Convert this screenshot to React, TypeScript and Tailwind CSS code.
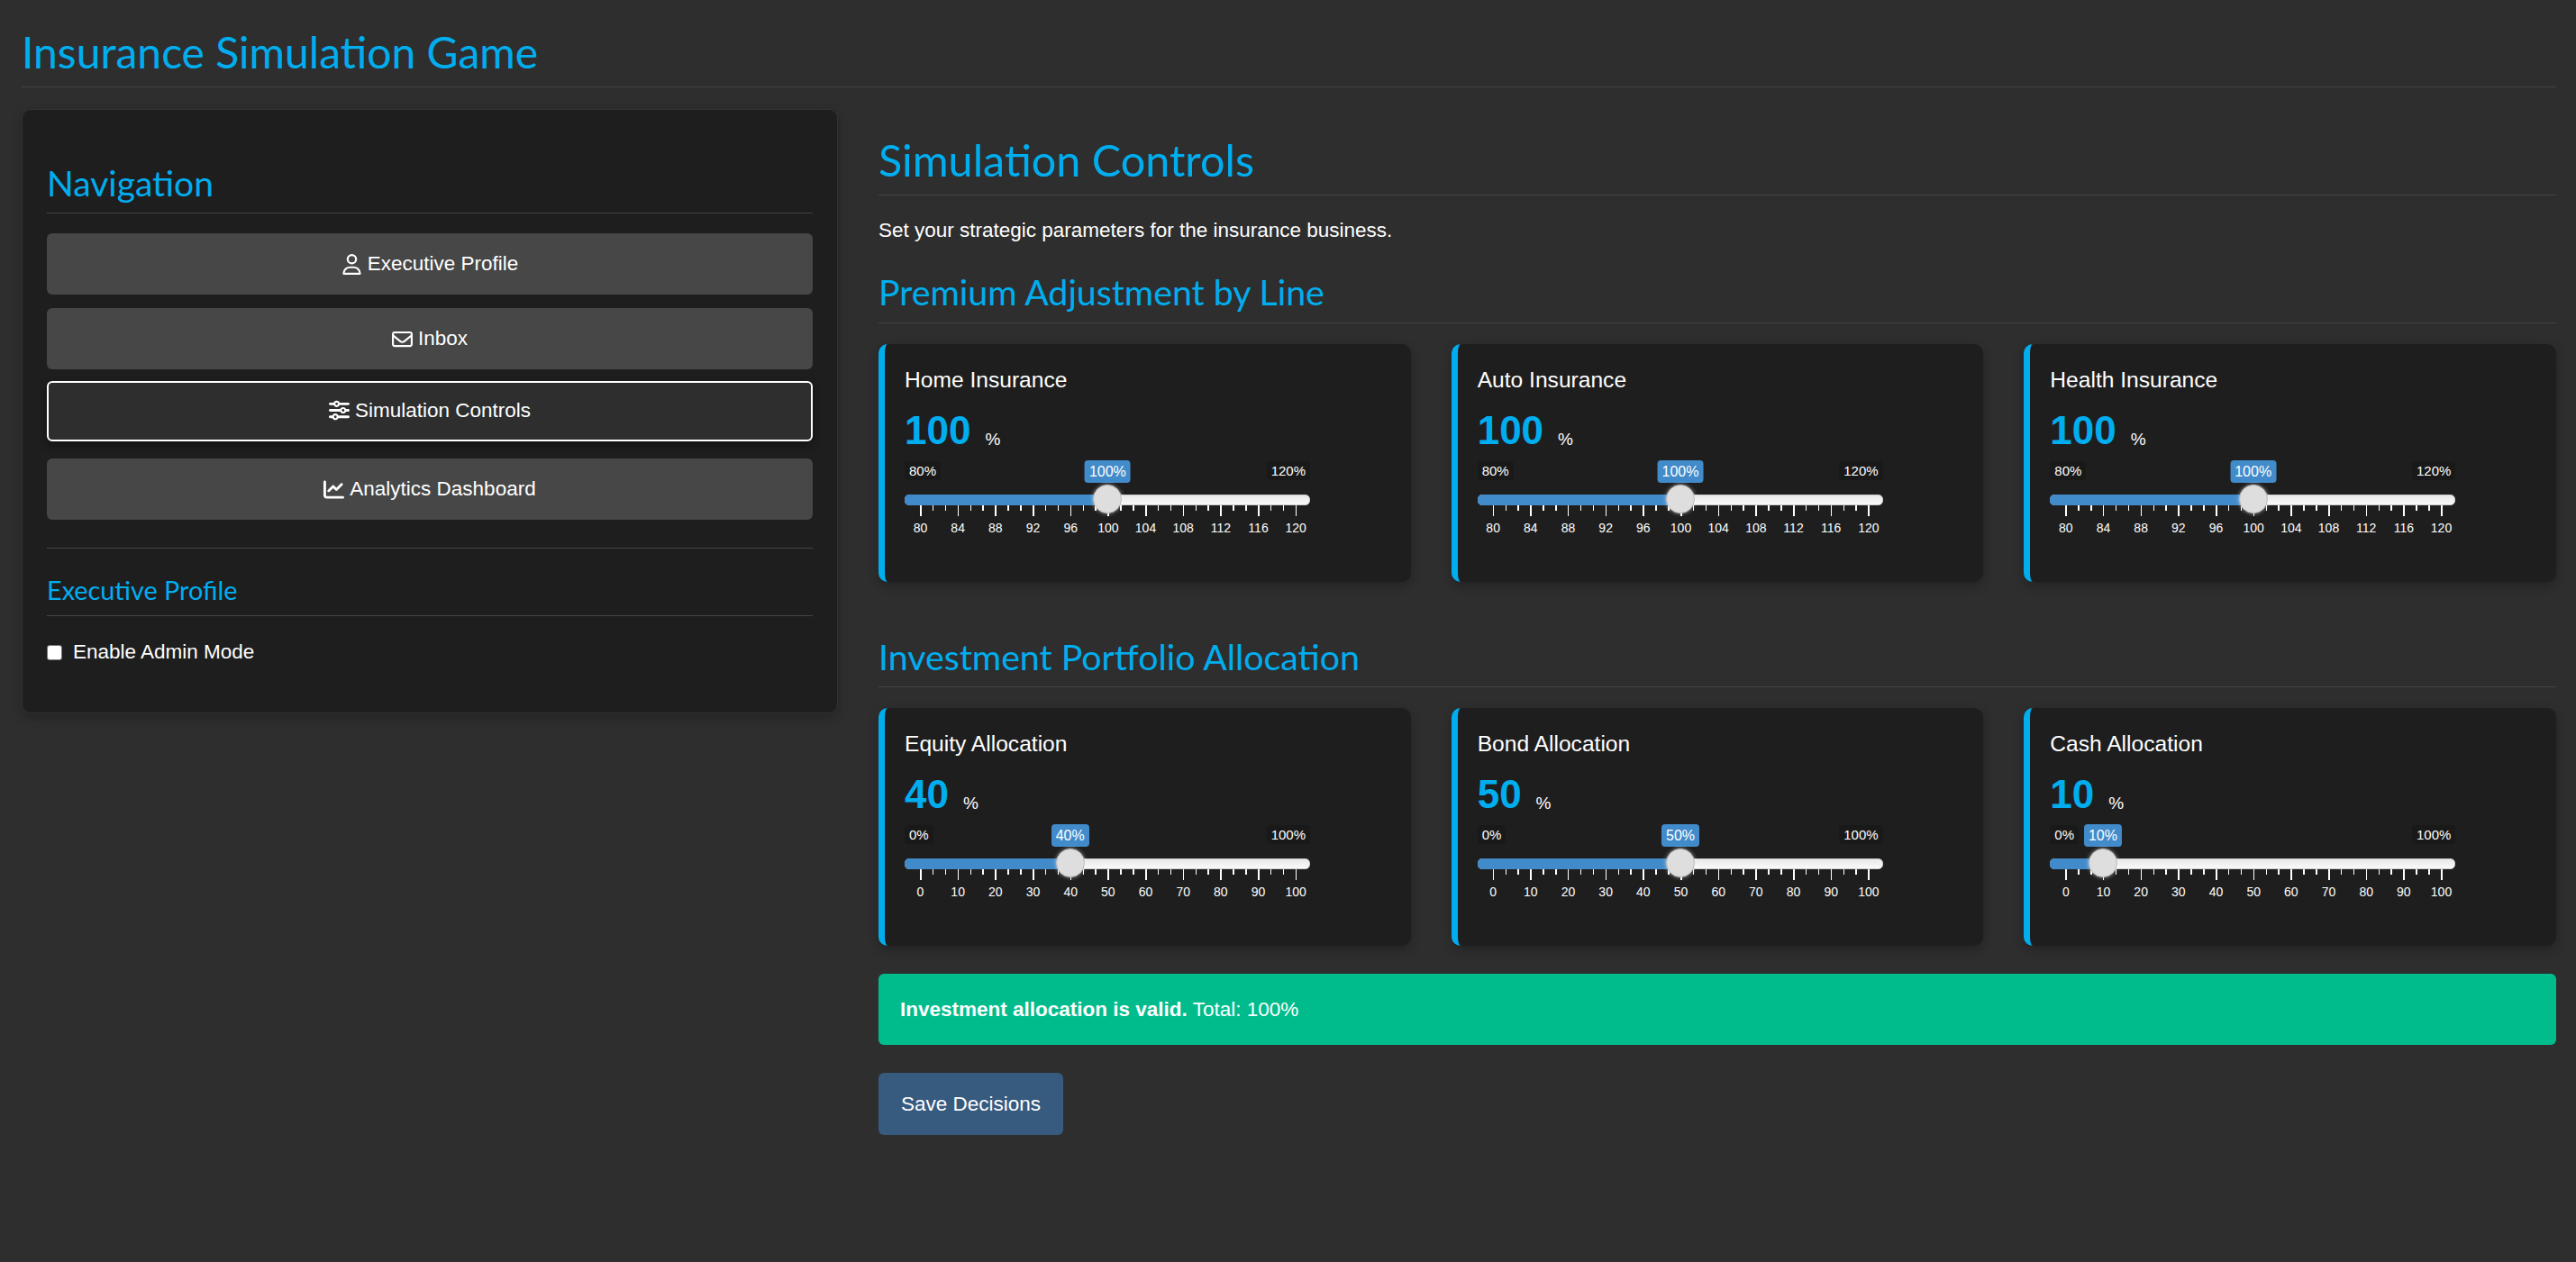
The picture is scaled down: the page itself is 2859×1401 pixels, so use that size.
import React from "react";
import { FaRegUser, FaRegEnvelope, FaSliders, FaChartLine } from "react-icons/fa6";

const lato = "font-['Lato',sans-serif] font-normal text-[#00aeef]";

interface SliderCardProps {
  title: string;
  value: number;
  min: number;
  max: number;
  step: number;
}

// grid ticks: 2 minor marks between each labelled major mark
const SliderCard: React.FC<SliderCardProps> = ({ title, value, min, max, step }) => {
  const pct = (value - min) / (max - min);
  const thumbX = 17 + pct * 416.7;
  const ticks = Array.from({ length: 31 }, (_, i) => i);
  const labels = Array.from({ length: 11 }, (_, i) => min + i * step);

  return (
    <div className="h-[264px] rounded-[10px] border-l-[7px] border-[#00aeef] bg-[#1e1e1e] pl-[22px] pt-[25px] shadow-[0_4px_12px_rgba(0,0,0,0.25)]">
      <div className="text-[24.6px] leading-[30px] text-white">{title}</div>
      <div className="mt-[16px] flex h-[50px] items-end">
        <span className="text-[44px] font-bold leading-[50px] text-[#00aeef]">{value}</span>
        <span className="mb-[3px] ml-[16px] text-[19px] leading-[24px] text-white">%</span>
      </div>
      <div className="relative mt-[8px] h-[100px] w-[450px] text-white">
        <span className="absolute left-0 top-[1px] rounded-[4px] bg-[#191919] px-[5px] text-[15px] leading-[21px]">{min}%</span>
        <span className="absolute right-0 top-[1px] rounded-[4px] bg-[#191919] px-[5px] text-[15px] leading-[21px]">{max}%</span>
        <span
          className="absolute top-0 -translate-x-1/2 rounded-[4px] bg-[#428bca] px-[5px] text-[16px] leading-[25px]"
          style={{ left: thumbX }}
        >
          {value}%
        </span>
        <div className="absolute left-0 top-[38px] h-[12px] w-full rounded-[5px] border border-[#ccc] bg-gradient-to-b from-[#e8e8e8] to-[#fafafa]" />
        <div className="absolute left-0 top-[38px] h-[12px] rounded-l-[5px] bg-[#428bca]" style={{ width: thumbX }} />
        {ticks.map((t) => (
          <span
            key={t}
            className={t % 3 === 0 ? "absolute top-[50px] h-[12px] w-[1.5px] bg-white" : "absolute top-[50px] h-[6px] w-[1.5px] bg-white"}
            style={{ left: 17 + (t * 416.7) / 30 }}
          />
        ))}
        {labels.map((l, i) => (
          <span
            key={l}
            className="absolute top-[66px] -translate-x-1/2 text-[14px] leading-[18px]"
            style={{ left: 17.5 + i * 41.67 }}
          >
            {l}
          </span>
        ))}
        <div
          className="absolute top-[27px] h-[32px] w-[32px] -translate-x-1/2 rounded-full border border-[#bbb] bg-[#dedede] shadow-[0_0_4px_rgba(255,255,255,0.55)]"
          style={{ left: thumbX }}
        />
      </div>
    </div>
  );
};

const NavButton: React.FC<{ icon: React.ReactNode; label: string; active?: boolean; className?: string }> = ({
  icon,
  label,
  active,
  className,
}) => (
  <button
    className={
      active
        ? "flex h-[67px] w-full items-center justify-center gap-[6px] rounded-[6px] border-2 border-white bg-[#2e2e2e] pb-[2px] text-[22.5px] text-white shadow-[0_4px_10px_rgba(0,0,0,0.4)] " + (className ?? "")
        : "flex h-[68px] w-full items-center justify-center gap-[6px] rounded-[6px] bg-[#474747] text-[22.5px] text-white " + (className ?? "")
    }
  >
    {icon}
    {label}
  </button>
);

export default function App() {
  return (
    <div className="min-h-[1401px] bg-[#2e2e2e] pl-[24px] pr-[22px] font-['Liberation_Sans',Arial,sans-serif] text-white">
      <h1 className={`${lato} h-[97px] border-b border-[#444] pt-[25px] text-[48px] leading-[66px]`}>Insurance Simulation Game</h1>

      <div className="mt-[24px] flex items-start gap-[45px]">
        {/* Sidebar */}
        <aside className="h-[671px] w-[906px] shrink-0 rounded-[10px] border border-[#333] bg-[#1e1e1e] px-[27px] shadow-[0_4px_12px_rgba(0,0,0,0.25)]">
          <h2 className={`${lato} h-[115px] border-b border-[#444] pt-[53px] text-[39px] leading-[56px]`}>Navigation</h2>
          <NavButton className="mt-[22px]" icon={<FaRegUser className="h-[23px] w-auto" />} label="Executive Profile" />
          <NavButton className="mt-[15px]" icon={<FaRegEnvelope className="h-[23px] w-auto" />} label="Inbox" />
          <NavButton className="mt-[13px]" active icon={<FaSliders className="h-[23px] w-auto" />} label="Simulation Controls" />
          <NavButton className="mt-[19px]" icon={<FaChartLine className="h-[23px] w-auto" />} label="Analytics Dashboard" />
          <div className="mt-[31px] h-[29px] border-t border-[#444]" />
          <h3 className={`${lato} h-[47px] border-b border-[#444] text-[28.8px] leading-[36px]`}>Executive Profile</h3>
          <label className="mt-[27px] flex items-center gap-[12px] text-[22.5px] leading-[26px]">
            <input type="checkbox" className="size-[17px] appearance-none rounded-[3px] border border-[#777] bg-white" />
            Enable Admin Mode
          </label>
        </aside>

        {/* Main */}
        <main className="min-w-0 flex-1">
          <h2 className={`${lato} h-[96px] border-b border-[#444] pt-[26px] text-[48.5px] leading-[60px]`}>Simulation Controls</h2>
          <p className="mt-[24px] text-[22.5px] leading-[30px]">Set your strategic parameters for the insurance business.</p>
          <h3 className={`${lato} mt-[14px] h-[74px] border-b border-[#444] pt-[14px] text-[39.3px] leading-[50px]`}>Premium Adjustment by Line</h3>
          <div className="mt-[23px] grid grid-cols-3 gap-x-[45px]">
            <SliderCard title="Home Insurance" value={100} min={80} max={120} step={4} />
            <SliderCard title="Auto Insurance" value={100} min={80} max={120} step={4} />
            <SliderCard title="Health Insurance" value={100} min={80} max={120} step={4} />
          </div>
          <h3 className={`${lato} mt-[40px] h-[77px] border-b border-[#444] pt-[18px] text-[39.3px] leading-[50px]`}>Investment Portfolio Allocation</h3>
          <div className="mt-[23px] grid grid-cols-3 gap-x-[45px]">
            <SliderCard title="Equity Allocation" value={40} min={0} max={100} step={10} />
            <SliderCard title="Bond Allocation" value={50} min={0} max={100} step={10} />
            <SliderCard title="Cash Allocation" value={10} min={0} max={100} step={10} />
          </div>
          <div className="mt-[31px] flex h-[79px] items-center rounded-[6px] bg-[#00bc8c] px-[24px] text-[22.5px]">
            <span><strong className="font-bold">Investment allocation is valid.</strong> Total: 100%</span>
          </div>
          <button className="mt-[31px] h-[69px] rounded-[6px] bg-[#375a7f] px-[25px] text-[22.5px] text-white">Save Decisions</button>
        </main>
      </div>
    </div>
  );
}
